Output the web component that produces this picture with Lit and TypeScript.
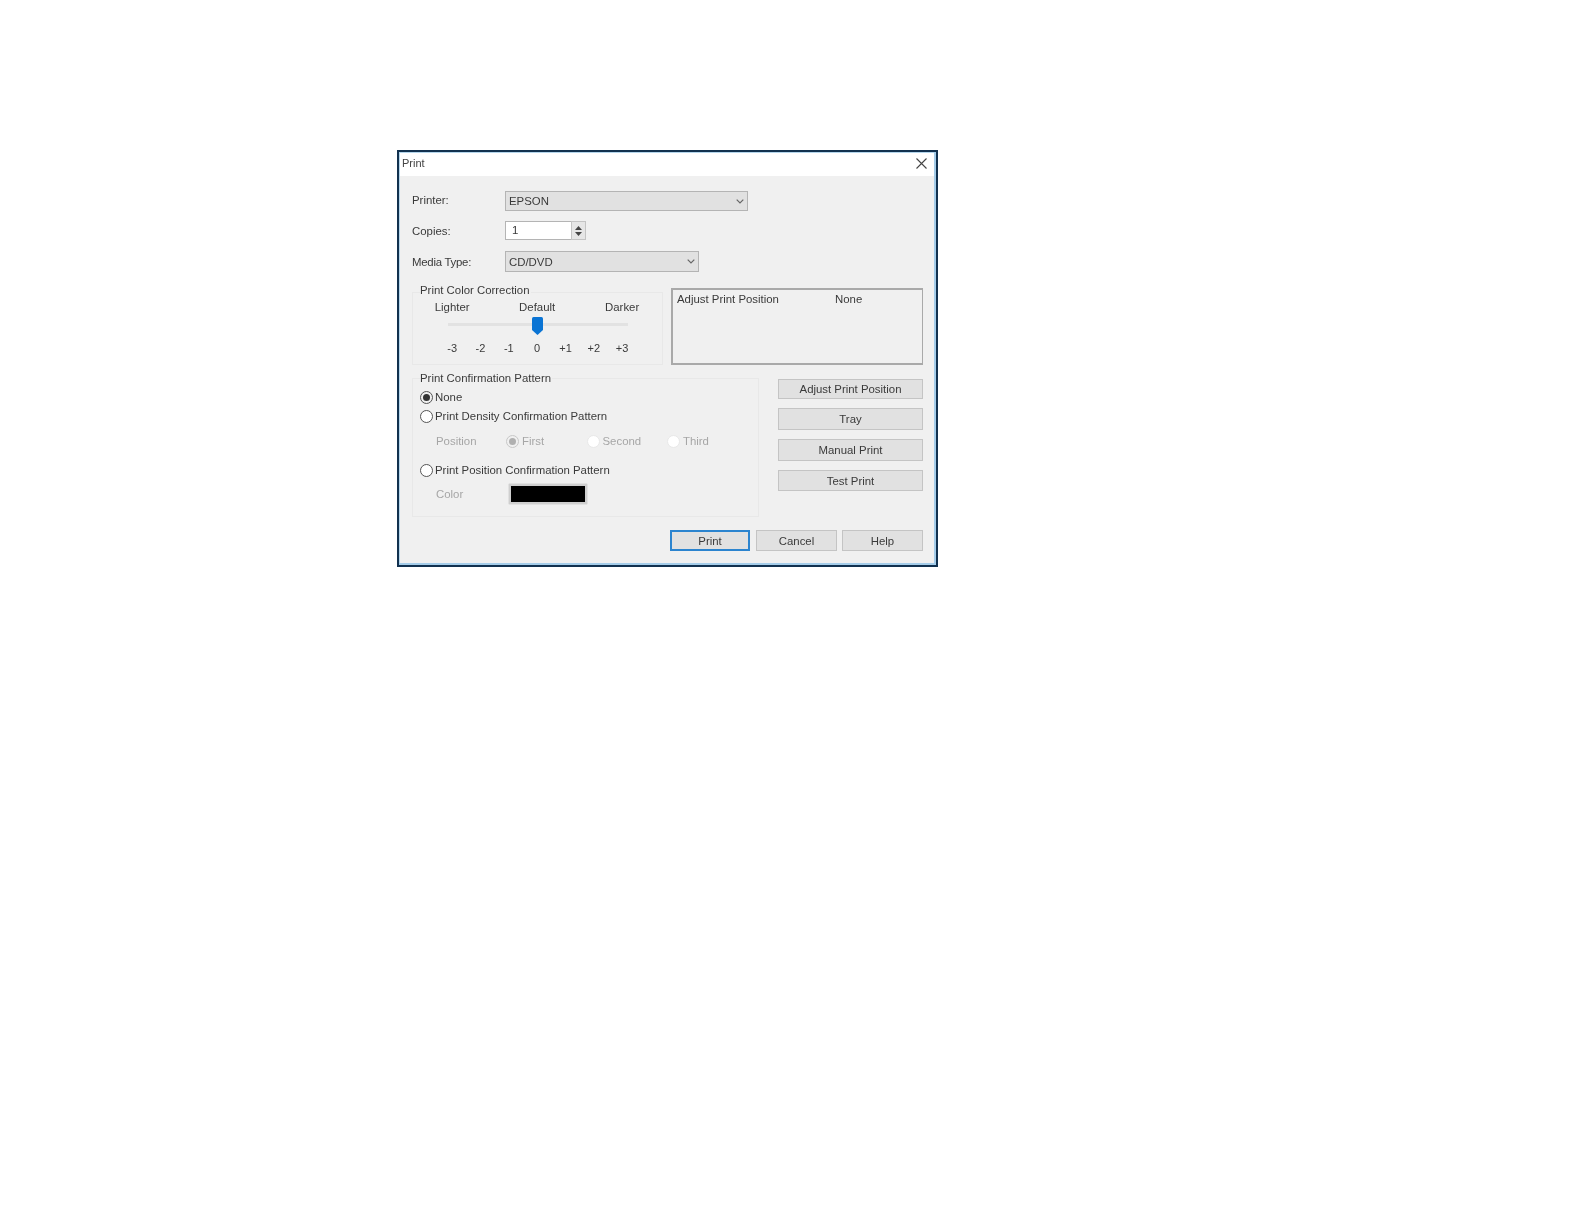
import { LitElement, html, css } from "lit";
import { customElement } from "lit/decorators.js";

const chevron = html`<svg class="chev" width="8" height="5" viewBox="0 0 8 5"><path d="M.7.7L4 4 7.3.7" fill="none" stroke="#666" stroke-width="1.2"/></svg>`;

@customElement("app-root")
export class AppRoot extends LitElement {
  static styles = css`
    :host { display: block; height: 1224px; overflow: hidden; background: #fff; font: 11.4px "Liberation Sans", Arial, sans-serif; color: #3a3a3a; }
    * { box-sizing: border-box; }
    .window { margin: 150px 0 0 397px; width: 541px; height: 417px; border: 2px solid #12314f; background: #f0f0f0; box-shadow: inset -2px -2px 0 #a5cdea, inset 1px 1px 0 #b5d6ec; filter: blur(0.5px); }
    .title { height: 23px; margin: 1px 2px 0 1px; background: #fff; display: flex; align-items: center; justify-content: space-between; padding: 0 7px 3px 2px; font-size: 11px; color: #444; }
    .row { display: flex; align-items: center; margin-left: 13px; }
    .lbl { width: 93px; }
    .r1 { margin-top: 15px; height: 20px; }
    .r1 .lbl { margin-top: -2px; }
    .r2 { margin-top: 10px; height: 19px; }
    .r3 { margin-top: 11px; height: 21px; }
    .r3 .lbl { letter-spacing: -0.25px; }
    .select { height: 100%; background: #e1e1e1; border: 1px solid #b4b4b4; display: flex; align-items: center; justify-content: space-between; padding: 0 3px 0 3px; }
    .s1 { width: 243px; }
    .s2 { width: 194px; }
    .input { width: 66px; height: 100%; background: #fff; border: 1px solid #b4b4b4; border-right: 0; padding-left: 6px; line-height: 17px; }
    .spin { width: 15px; height: 100%; background: #e6e6e6; border: 1px solid #c4c4c4; display: flex; flex-direction: column; align-items: center; justify-content: center; gap: 2px; }
    .mid { display: flex; margin: 16px 0 0 13px; align-items: flex-start; }
    .group { border: 1px solid #e8e8e8; }
    .legend { display: block; width: fit-content; background: #f0f0f0; padding: 0 1px 0 0; margin-left: 7px; line-height: 14px; margin-top: -10px; }
    .color { margin-top: 4px; width: 251px; height: 73px; }
    .scale { display: grid; grid-template-columns: repeat(7, 28.33px); padding-left: 25px; }
    .scale span { justify-self: center; white-space: nowrap; }
    .names { margin-top: 3px; line-height: 14px; }
    .ticks { line-height: 14px; margin-top: 15px; font-size: 11px; }
    .track { position: relative; height: 3px; width: 180px; margin: 9px 0 0 35px; background: #e2e2e2; }
    .thumb { position: absolute; left: 84px; top: -6px; }
    .box { margin-left: 8px; width: 252px; height: 77px; border: 2px solid #a9a9a9; border-right-width: 1px; display: flex; padding: 2px 0 0 4px; line-height: 14px; }
    .box span:first-child { width: 158px; }
    .lower { display: flex; margin: 12px 0 0 13px; align-items: flex-start; }
    .confirm { width: 347px; height: 139px; margin-top: 1px; padding-left: 7px; }
    .confirm .legend { margin-left: 0; margin-top: -8px; }
    .opt { display: flex; align-items: center; height: 14px; white-space: nowrap; }
    .radio { width: 13px; height: 13px; border-radius: 50%; background: #fff; border: 1.5px solid #555; margin-right: 2px; flex: none; display: flex; align-items: center; justify-content: center; }
    .radio.on { background: #f0f0f0; }
    .radio.on::after { content: ""; width: 7px; height: 7px; border-radius: 50%; background: #333; }
    .radio.off { border: 1px solid #e8e8e8; margin-right: 3px; }
    .radio.off.on { border-color: #c8c8c8; }
    .radio.off.on::after { background: #b0b0b0; }
    .dim { color: #a6a6a6; }
    .o1 { margin-top: 5px; }
    .o2 { margin-top: 5px; }
    .opts { display: flex; align-items: center; height: 14px; margin-top: 11px; padding-left: 16px; }
    .opts > .dim:first-child { width: 70px; }
    .opts .opt { width: 80.5px; }
    .o3 { margin-top: 15px; }
    .colorrow { display: flex; align-items: center; margin-top: 7px; padding-left: 16px; }
    .colorrow .dim { width: 73px; }
    .swatch { width: 78px; height: 20px; background: #000; border: 2px solid #cfcfcf; box-shadow: 0 0 1px #999; }
    .buttons { margin-left: 19px; width: 145px; margin-top: 2px; display: flex; flex-direction: column; }
    .btn { height: 21px; background: #e1e1e1; border: 1px solid #c4c4c4; display: flex; align-items: center; justify-content: center; color: #3a3a3a; }
    .buttons .btn:first-child { height: 20px; }
    .buttons .btn + .btn { margin-top: 9px; }
    .buttons .btn:nth-child(2), .buttons .btn:nth-child(3) { height: 22px; }
    .foot { display: flex; justify-content: flex-end; gap: 5px; margin: 13px 13px 0 0; }
    .foot .btn { width: 81px; }
    .foot .primary { width: 80px; border: 2px solid #2b84cf; margin-right: 1px; }
  `;

  render() {
    return html`
      <div class="window">
        <div class="title">
          <span>Print</span>
          <svg width="11" height="11" viewBox="0 0 11 11"><path d="M.5.5l10 10M10.5.5l-10 10" stroke="#444" stroke-width="1.1" fill="none"/></svg>
        </div>
        <div class="row r1"><span class="lbl">Printer:</span><div class="select s1"><span>EPSON</span>${chevron}</div></div>
        <div class="row r2"><span class="lbl">Copies:</span><div class="input">1</div>
          <div class="spin">
            <svg width="7" height="4" viewBox="0 0 7 4"><path d="M3.5 0L7 4H0z" fill="#444"/></svg>
            <svg width="7" height="4" viewBox="0 0 7 4"><path d="M0 0h7L3.5 4z" fill="#444"/></svg>
          </div>
        </div>
        <div class="row r3"><span class="lbl">Media Type:</span><div class="select s2"><span>CD/DVD</span>${chevron}</div></div>
        <div class="mid">
          <div class="group color">
            <span class="legend">Print Color Correction</span>
            <div class="scale names">
              <span>Lighter</span><i></i><i></i><span>Default</span><i></i><i></i><span>Darker</span>
            </div>
            <div class="track">
              <svg class="thumb" width="11" height="18" viewBox="0 0 11 18"><path d="M0 1.5Q0 0 1.5 0h8Q11 0 11 1.5V13l-5.5 5L0 13z" fill="#0a74d4"/></svg>
            </div>
            <div class="scale ticks">
              <span>-3</span><span>-2</span><span>-1</span><span>0</span><span>+1</span><span>+2</span><span>+3</span>
            </div>
          </div>
          <div class="box"><span>Adjust Print Position</span><span>None</span></div>
        </div>
        <div class="lower">
          <div class="group confirm">
            <span class="legend">Print Confirmation Pattern</span>
            <div class="opt o1"><span class="radio on"></span>None</div>
            <div class="opt o2"><span class="radio"></span>Print Density Confirmation Pattern</div>
            <div class="opts">
              <span class="dim">Position</span>
              <div class="opt dim"><span class="radio off on"></span>First</div>
              <div class="opt dim"><span class="radio off"></span>Second</div>
              <div class="opt dim"><span class="radio off"></span>Third</div>
            </div>
            <div class="opt o3"><span class="radio"></span>Print Position Confirmation Pattern</div>
            <div class="colorrow"><span class="dim">Color</span><div class="swatch"></div></div>
          </div>
          <div class="buttons">
            <div class="btn">Adjust Print Position</div>
            <div class="btn">Tray</div>
            <div class="btn">Manual Print</div>
            <div class="btn">Test Print</div>
          </div>
        </div>
        <div class="foot">
          <div class="btn primary">Print</div>
          <div class="btn">Cancel</div>
          <div class="btn">Help</div>
        </div>
      </div>
    `;
  }
}
